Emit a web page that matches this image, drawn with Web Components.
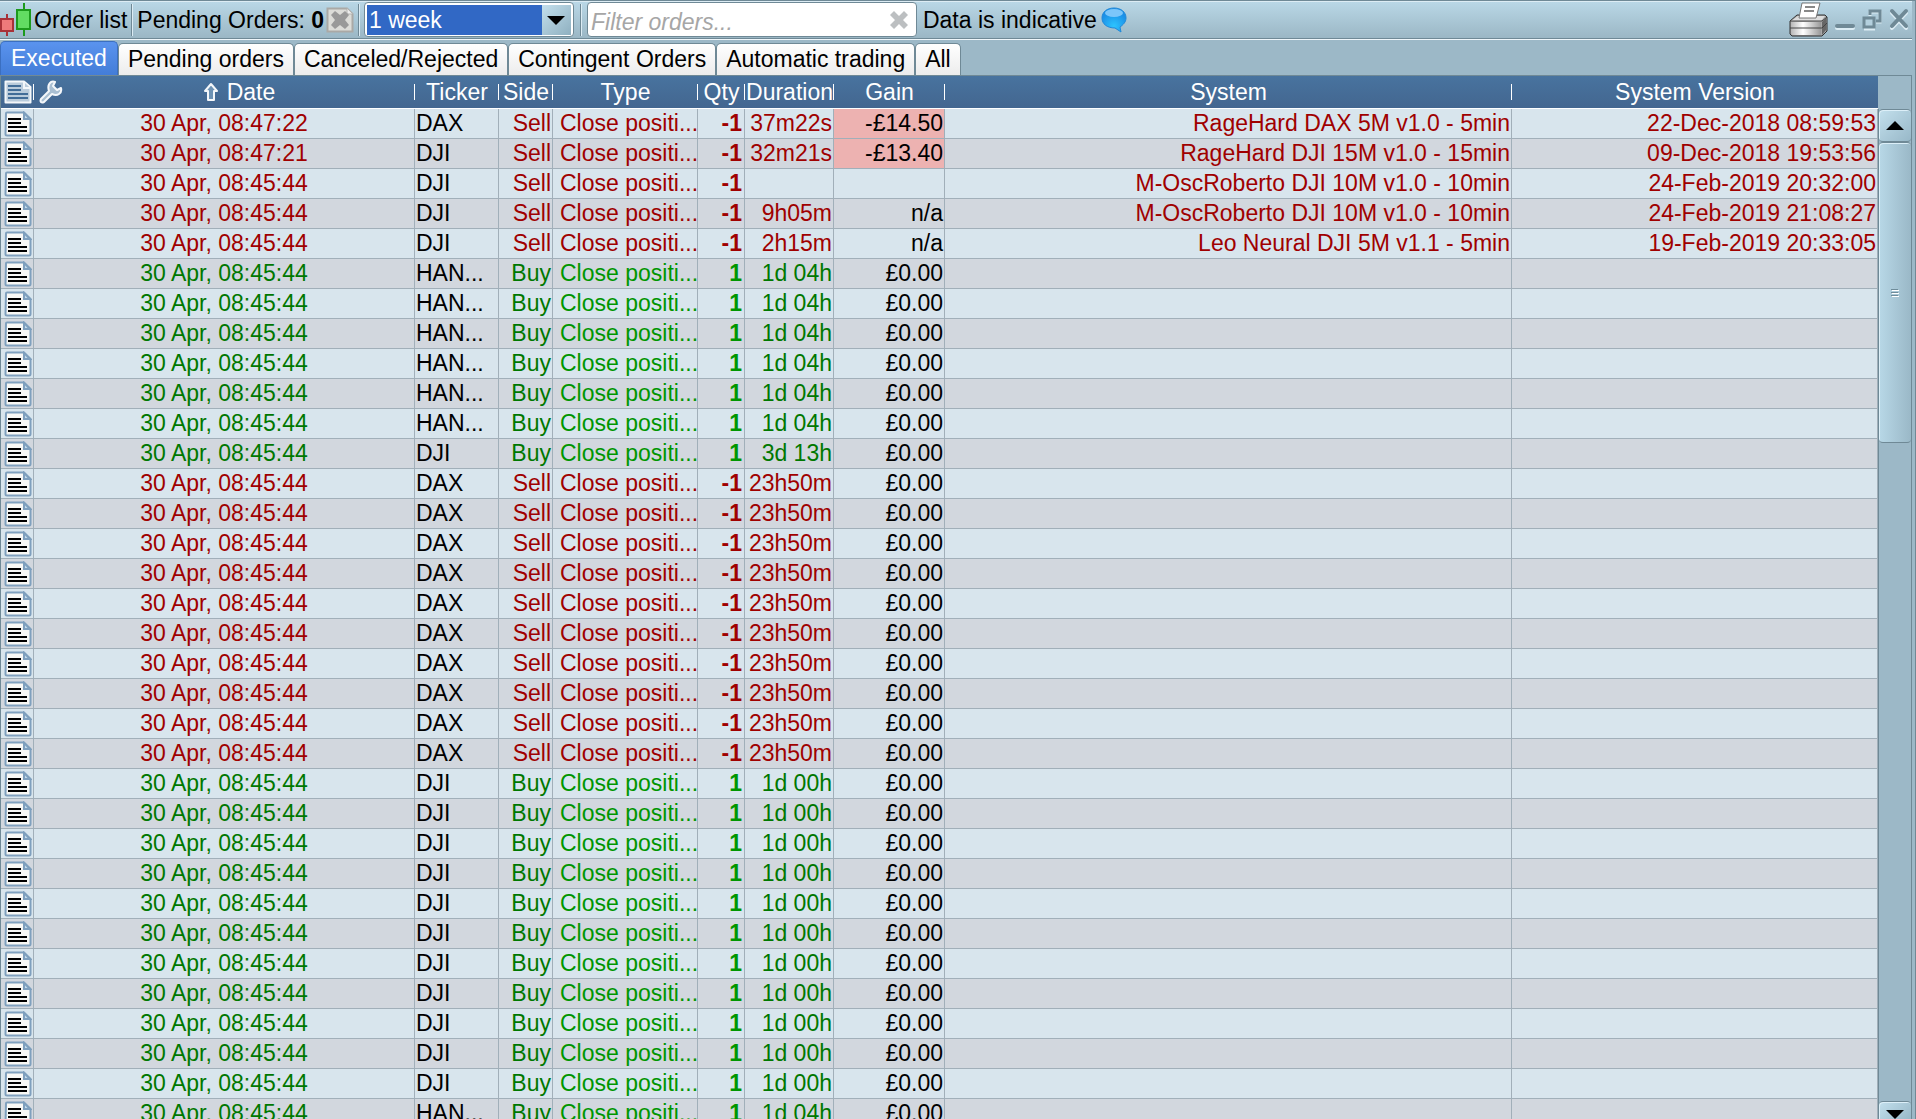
<!DOCTYPE html>
<html lang="en">
<head>
<meta charset="utf-8">
<title>Order list</title>
<style>
    html, body {
        margin: 0;
        height: 100%;
    }
    body {
        overflow: hidden;
        font-family: "Liberation Sans", Arial, sans-serif;
        font-size: 23px;
        line-height: 28px;
        color: #000;
        background: #9cb8c7;
    }
</style>
</head>
<body>
<order-window>
    <tool-bar slot="toolbar"></tool-bar>
    <tab-bar slot="tabs">
        <tab-item active>Executed</tab-item>
        <tab-item>Pending orders</tab-item>
        <tab-item>Canceled/Rejected</tab-item>
        <tab-item>Contingent Orders</tab-item>
        <tab-item>Automatic trading</tab-item>
        <tab-item>All</tab-item>
    </tab-bar>
    <order-table></order-table>
    <scroll-strip slot="scroll"></scroll-strip>
</order-window>

<script>
const icons = {
    candles: `<svg width="32" height="34" viewBox="0 0 32 34"><path d="M7 11V33" stroke="#a83238" stroke-width="2"/><rect x="0" y="15" width="14" height="14" fill="#a83238"/><rect x="2" y="17" width="10" height="10" fill="#ee7a7a"/><path d="M24 0V33" stroke="#1c9a1c" stroke-width="2"/><rect x="16" y="6" width="15" height="21" fill="#1c9a1c"/><rect x="18" y="8" width="11" height="17" fill="#62dc62"/></svg>`,
    cancel: `<svg width="28" height="26" viewBox="0 0 28 26"><path d="M1.500 1.500H21L26.500 7V24.500H1.500Z" fill="#dcdcd8" stroke="#aaa9a6" stroke-width="2"/><path d="M21 1.500V7H26.500" fill="#eee" stroke="#b5b5b2"/><path d="M5 8L9 4L14 8L19 4L23 8L19 13L23 18L19 22L14 18L9 22L5 18L9 13Z" fill="#999"/></svg>`,
    clear: `<svg width="20" height="20" viewBox="0 0 20 20"><path d="M1 5L5 1L10 6L15 1L19 5L14 10L19 15L15 19L10 14L5 19L1 15L6 10Z" fill="#bcbfc1"/></svg>`,
    bubble: `<svg width="26" height="26" viewBox="0 0 26 26"><defs><radialGradient id="glow" cx=".5" cy=".75" r=".6"><stop offset="0" stop-color="#2cc4ff"/><stop offset="1" stop-color="#1c8fe6"/></radialGradient></defs><path d="M13 1C20 1 25 5 25 11C25 15 22 18 19 20L20 25L14 21C6 21 1 17 1 11C1 5 6 1 13 1Z" fill="url(#glow)" stroke="#2088d8"/><ellipse cx="13" cy="6" rx="9" ry="4" fill="#7cc6fa"/></svg>`,
    print: `<svg width="40" height="36" viewBox="0 0 40 36"><defs><linearGradient id="case"><stop offset="0" stop-color="#b8b8b8"/><stop offset=".4" stop-color="#fff"/><stop offset="1" stop-color="#999"/></linearGradient></defs><path d="M2 19L9 13H37L39 15V29L34 34H4L2 32Z" fill="#aaa" stroke="#333"/><path d="M3 19L10 14H37L33 19Z" fill="#ddd"/><path d="M3 20H33V33H4L3 31Z" fill="url(#case)"/><path d="M34 20L38 16V28L34 33Z" fill="#666"/><path d="M2 26H34L39 21M2 19H34L39 15" fill="none" stroke="#444"/><path d="M14 1H32L28 16H11Z" fill="#fff" stroke="#777"/><path d="M17 5H27M16 9H26" stroke="#888" stroke-width="2"/></svg>`,
    minimise: `<svg width="20" height="24" viewBox="0 0 20 24"><path d="M2 20H18" stroke="#dcecf4" stroke-width="4" stroke-linecap="round"/><path d="M2 18H18" stroke="#6f8996" stroke-width="4" stroke-linecap="round"/></svg>`,
    restore: `<svg width="20" height="24" viewBox="0 0 20 24"><path d="M8 8V4H18V14H14M2 21H13" fill="none" stroke="#dcecf4" stroke-width="3"/><path d="M8 7V3H18V13H14" fill="none" stroke="#6f8996" stroke-width="3"/><path d="M2 10H12V19H2Z" fill="#b4d0de" stroke="#6f8996" stroke-width="3"/></svg>`,
    close: `<svg width="20" height="24" viewBox="0 0 20 24"><path d="M3 5L17 20M17 5L3 20" stroke="#dcecf4" stroke-width="4" stroke-linecap="round"/><path d="M3 3L17 18M17 3L3 18" stroke="#6f8996" stroke-width="4" stroke-linecap="round"/></svg>`,
    doc: `<svg width="28" height="26" viewBox="0 0 28 26"><path d="M2 2.500Q2 1.500 3 1.500H20L26.500 8V23Q26.500 24.500 25 24.500H3Q1.500 24.500 1.500 23Z" fill="#f8f8f5" stroke="#7fa0be" stroke-width="2"/><path d="M20 2V8H26Z" fill="#c6dced" stroke="#7fa0be" stroke-width="2"/><path d="M4 8H17M4 12H17M4 16H23M4 20H23" stroke="#000" stroke-width="2"/></svg>`,
    list: `<svg width="28" height="24" viewBox="0 0 28 24"><path d="M1.500 1.500H20L26.500 7V22.500H1.500Z" fill="#b9cbdb" stroke="#f4f7fa" stroke-width="2" stroke-linejoin="round"/><path d="M20 2V8H26" fill="#b9cbdb" stroke="#f4f7fa" stroke-width="2"/><path d="M4 6H17M4 10H17M4 14H24M4 18H24" stroke="#426d98" stroke-width="2"/></svg>`,
    wrench: `<svg width="24" height="24" viewBox="0 0 24 24"><path d="M2 19L10 11Q8 5 12 2Q14 1 16 2L14 6L18 10L22 8Q23 12 20 14Q17 16 13 14L5 22Q3 23 2 22Q1 21 2 19Z" fill="#a9bfd2" stroke="#f4f7fa" stroke-width="2" stroke-linejoin="round"/></svg>`,
    up: `<svg width="16" height="20" viewBox="0 0 16 20"><path d="M8 2L14 9H11V18H5V9H2Z" fill="#6d92b4" stroke="#f4f7fa" stroke-width="2" stroke-linejoin="round"/></svg>`,
    arrowUp: `<svg width="18" height="10" viewBox="0 0 18 10"><path d="M0 9L9 0L18 9Z"/></svg>`,
    arrowDown: `<svg width="18" height="10" viewBox="0 0 18 10"><path d="M0 1L9 10L18 1Z"/></svg>`,
    grip: `<svg width="8" height="8" viewBox="0 0 8 8"><path d="M1 1.500H8M1 4.500H8M1 7.500H8" stroke="#fff"/><path d="M0 .5H7M0 3.500H7M0 6.500H7" stroke="#6f8c9a"/></svg>`
};

class UiIcon extends HTMLElement {
    connectedCallback() {
        const shadow = this.attachShadow({ mode: 'open' });
        shadow.innerHTML = `
        <style>
            :host { display: inline-flex; flex: none; }
            svg { display: block; }
        </style>
        ${icons[this.getAttribute('name')]}
        `;
    }
}

// Frame of the window: toolbar, tabs, then the list with its scrollbar
class OrderWindow extends HTMLElement {
    connectedCallback() {
        const shadow = this.attachShadow({ mode: 'open' });
        shadow.innerHTML = `
        <style>
            :host {
                display: flex;
                flex-direction: column;
                box-sizing: border-box;
                height: 100vh;
                border-top: 1px solid #6f8996;
                border-right: 1px solid #6f8996;
                overflow: hidden;
            }
            .list {
                display: flex;
                flex: 1;
                min-height: 0;
                margin-right: 3px;
                border: solid #6f8996;
                border-width: 1px 1px 0;
            }
            .rows {
                flex: 1;
                min-width: 0;
                overflow: hidden;
            }
        </style>
        <slot name="toolbar"></slot>
        <slot name="tabs"></slot>
        <div class="list">
            <div class="rows"><slot></slot></div>
            <slot name="scroll"></slot>
        </div>
        `;
    }
}

class ToolBar extends HTMLElement {
    connectedCallback() {
        const shadow = this.attachShadow({ mode: 'open' });
        shadow.innerHTML = `
        <style>
            :host {
                display: flex;
                align-items: center;
                box-sizing: border-box;
                height: 39px;
                margin-right: 3px;
                padding-bottom: 2px;
                border-top: 1px solid #dcecf4;
                border-bottom: 1px solid #eef6fa;
                box-shadow: inset 0 -1px #6f8996;
                background: linear-gradient(#b9d7e6, #9ab6c4);
            }
            .part {
                display: flex;
                align-items: center;
                height: 32px;
                padding-right: 4px;
                margin-right: 5px;
                border-right: 1px solid #6f8996;
                box-shadow: 1px 0 #dcecf4;
                gap: 2px;
                white-space: nowrap;
            }
            button {
                display: flex;
                padding: 0;
                border: 0;
                background: none;
            }
            .period, .filter {
                display: flex;
                align-items: center;
                box-sizing: border-box;
                height: 35px;
                border: 1px solid #6f8996;
                border-radius: 4px;
                background: #fff;
            }
            .period {
                width: 210px;
                padding: 2px;
            }
            select {
                appearance: none;
                flex: 1;
                height: 30px;
                padding: 0 2px;
                border: 0;
                border-radius: 0;
                font: inherit;
                color: #fff;
                background: #3168c5;
            }
            .arrow {
                display: flex;
                align-items: center;
                justify-content: center;
                width: 29px;
                height: 30px;
                background: linear-gradient(135deg, #c3dfec, #8fb0c0);
                pointer-events: none;
            }
            .filter {
                width: 330px;
                margin-right: 6px;
                padding: 0 7px 0 3px;
            }
            input {
                flex: 1;
                min-width: 0;
                height: 32px;
                padding: 6px 0 0;
                border: 0;
                box-sizing: border-box;
                font: inherit;
                font-style: italic;
                background: none;
            }
            input::placeholder { color: #a6a6a6; }
            .bars { padding: 0; margin: 0 6px; }
            .info { margin-right: 4px; }
            .end {
                display: flex;
                align-items: center;
                gap: 7px;
                margin-left: auto;
                padding-right: 3px;
            }
        </style>
        <div class="part"><ui-icon name="candles"></ui-icon><span>Order list</span></div>
        <div class="part"><span>Pending Orders: <b>0</b></span><button aria-label="Cancel all"><ui-icon name="cancel"></ui-icon></button></div>
        <div class="period">
            <select aria-label="Period"><option>1 week</option></select>
            <span class="arrow"><ui-icon name="arrowDown"></ui-icon></span>
        </div>
        <div class="part bars"></div>
        <div class="filter">
            <input type="text" placeholder="Filter orders..." aria-label="Filter orders">
            <button aria-label="Clear"><ui-icon name="clear"></ui-icon></button>
        </div>
        <span class="info">Data is indicative</span>
        <ui-icon name="bubble"></ui-icon>
        <div class="end">
            <button aria-label="Print"><ui-icon name="print"></ui-icon></button>
            <button aria-label="Minimise"><ui-icon name="minimise"></ui-icon></button>
            <button aria-label="Restore"><ui-icon name="restore"></ui-icon></button>
            <button aria-label="Close"><ui-icon name="close"></ui-icon></button>
        </div>
        `;
    }
}

class TabBar extends HTMLElement {
    connectedCallback() {
        const shadow = this.attachShadow({ mode: 'open' });
        shadow.innerHTML = `
        <style>
            :host {
                display: flex;
                align-items: flex-end;
                height: 35px;
            }
        </style>
        <slot></slot>
        `;
    }
}

class TabItem extends HTMLElement {
    connectedCallback() {
        const shadow = this.attachShadow({ mode: 'open' });
        shadow.innerHTML = `
        <style>
            :host { display: block; }
            button {
                display: block;
                box-sizing: border-box;
                height: 32px;
                padding: 0 9px 2px;
                border: 1px solid #6f8996;
                border-bottom: 0;
                border-radius: 5px 5px 0 0;
                font: inherit;
                color: #000;
                white-space: nowrap;
                background: linear-gradient(#fff, #ececec);
            }
            :host([active]) button {
                height: 34px;
                padding: 0 10px 2px;
                border-color: #3b6fc0;
                color: #fff;
                background: linear-gradient(#5a93ee, #437dd8);
            }
        </style>
        <button><slot></slot></button>
        `;
    }
}

const columns = [
    ['icon', 33], ['Date', 381], ['Ticker', 84], ['Side', 54], ['Type', 145],
    ['Qty', 47], ['Duration', 89], ['Gain', 111], ['System', 567], ['System Version', 0]
];

// count, then ticker, side, quantity, duration, gain, system, version
const repeat = (count, ...row) => Array(count).fill(['30 Apr, 08:45:44', ...row]);
const orders = [
    ['30 Apr, 08:47:22', 'DAX', 'Sell', '-1', '37m22s', '-£14.50', 'RageHard DAX 5M v1.0 - 5min', '22-Dec-2018 08:59:53'],
    ['30 Apr, 08:47:21', 'DJI', 'Sell', '-1', '32m21s', '-£13.40', 'RageHard DJI 15M v1.0 - 15min', '09-Dec-2018 19:53:56'],
    ...repeat(1, 'DJI', 'Sell', '-1', '', '', 'M-OscRoberto DJI 10M v1.0 - 10min', '24-Feb-2019 20:32:00'),
    ...repeat(1, 'DJI', 'Sell', '-1', '9h05m', 'n/a', 'M-OscRoberto DJI 10M v1.0 - 10min', '24-Feb-2019 21:08:27'),
    ...repeat(1, 'DJI', 'Sell', '-1', '2h15m', 'n/a', 'Leo Neural DJI 5M v1.1 - 5min', '19-Feb-2019 20:33:05'),
    ...repeat(6, 'HAN...', 'Buy', '1', '1d 04h', '£0.00', '', ''),
    ...repeat(1, 'DJI', 'Buy', '1', '3d 13h', '£0.00', '', ''),
    ...repeat(10, 'DAX', 'Sell', '-1', '23h50m', '£0.00', '', ''),
    ...repeat(11, 'DJI', 'Buy', '1', '1d 00h', '£0.00', '', ''),
    ...repeat(1, 'HAN...', 'Buy', '1', '1d 04h', '£0.00', '', '')
];

class OrderTable extends HTMLElement {
    connectedCallback() {
        const shadow = this.attachShadow({ mode: 'open' });
        shadow.innerHTML = `
        <style>
            :host { display: block; }
            table {
                width: 100%;
                table-layout: fixed;
                border-collapse: separate;
                border-spacing: 0;
            }
            th, td {
                box-sizing: border-box;
                padding: 0 1px;
                overflow: hidden;
                white-space: nowrap;
                font-weight: normal;
            }
            thead tr { background: linear-gradient(#48739f, #43668f); }
            th {
                height: 33px;
                padding: 0;
                border-bottom: 1px solid #fff;
                color: #fff;
                background: linear-gradient(#fff, #fff) right center / 1px 16px no-repeat;
            }
            th:last-child { background: none; }
            th > ui-icon { display: flex; padding-left: 3px; }
            .date {
                display: flex;
                align-items: center;
                padding-left: 5px;
            }
            .date span {
                display: flex;
                flex: 1;
                align-items: center;
                justify-content: center;
                gap: 8px;
            }
            td {
                height: 30px;
                border-right: 1px solid #a1afb9;
                border-bottom: 1px solid #a1afb9;
                text-align: right;
                vertical-align: top;
            }
            tbody tr { background: #d8e5ed; color: #007800; }
            tbody tr:nth-child(even) { background: #d2d7de; }
            tbody tr.sell { color: #a00000; }
            td:nth-child(1) { padding: 0 0 0 3px; vertical-align: middle; }
            td:nth-child(1) ui-icon { display: flex; }
            td:nth-child(2) { text-align: center; }
            td:nth-child(3) { text-align: left; color: #000; }
            td:nth-child(5) { padding-left: 7px; text-align: left; }
            td:nth-child(6) { padding-right: 2px; font-weight: bold; }
            .buy td:nth-child(5), .buy td:nth-child(6) { color: #009600; }
            td:nth-child(8) { color: #000; }
            td.loss { background: #edb2b1; }
        </style>
        <table>
            <colgroup>${columns.map(([, width]) => `<col${width ? ` style="width:${width}px"` : ''}>`).join('')}</colgroup>
            <thead><tr>${columns.map(([name]) => this.head(name)).join('')}</tr></thead>
            <tbody>${orders.map(order => this.row(order)).join('')}</tbody>
        </table>
        `;
    }

    head(name) {
        if (name === 'icon') return '<th><ui-icon name="list"></ui-icon></th>';
        if (name === 'Date') return '<th><div class="date"><ui-icon name="wrench"></ui-icon><span><ui-icon name="up"></ui-icon>Date</span></div></th>';
        return `<th>${name}</th>`;
    }

    row([date, ticker, side, qty, duration, gain, system, version]) {
        return `<tr class="${side.toLowerCase()}">
            <td><ui-icon name="doc"></ui-icon></td><td>${date}</td><td>${ticker}</td><td>${side}</td>
            <td>Close positi...</td><td>${qty}</td><td>${duration}</td>
            <td${gain.startsWith('-') ? ' class="loss"' : ''}>${gain}</td><td>${system}</td><td>${version}</td>
        </tr>`;
    }
}

class ScrollStrip extends HTMLElement {
    connectedCallback() {
        const shadow = this.attachShadow({ mode: 'open' });
        shadow.innerHTML = `
        <style>
            :host {
                display: flex;
                flex: none;
                flex-direction: column;
                box-sizing: border-box;
                width: 33px;
                padding-top: 33px;
            }
            .track {
                display: flex;
                flex: 1;
                flex-direction: column;
                border-left: 1px solid #6f8996;
                overflow: hidden;
            }
            button, .thumb {
                display: flex;
                flex: none;
                align-items: center;
                justify-content: center;
                box-sizing: border-box;
                height: 33px;
                padding: 0;
                border: solid #6f8996;
                border-width: 1px 0;
                border-radius: 4px;
                box-shadow: inset 1px 1px #dceff8;
                background: linear-gradient(135deg, #c3e0ed, #98b8c8);
            }
            .thumb {
                height: 301px;
                background: linear-gradient(90deg, #b8d8e7, #9ab8c7);
            }
            .down {
                align-items: flex-end;
                height: 18px;
                margin-top: auto;
                border-bottom: 0;
                border-radius: 4px 4px 0 0;
            }
        </style>
        <div class="track">
            <button aria-label="Scroll up"><ui-icon name="arrowUp"></ui-icon></button>
            <div class="thumb"><ui-icon name="grip"></ui-icon></div>
            <button class="down" aria-label="Scroll down"><ui-icon name="arrowDown"></ui-icon></button>
        </div>
        `;
    }
}

customElements.define('ui-icon', UiIcon);
customElements.define('order-window', OrderWindow);
customElements.define('tool-bar', ToolBar);
customElements.define('tab-bar', TabBar);
customElements.define('tab-item', TabItem);
customElements.define('order-table', OrderTable);
customElements.define('scroll-strip', ScrollStrip);
</script>
</body>
</html>
